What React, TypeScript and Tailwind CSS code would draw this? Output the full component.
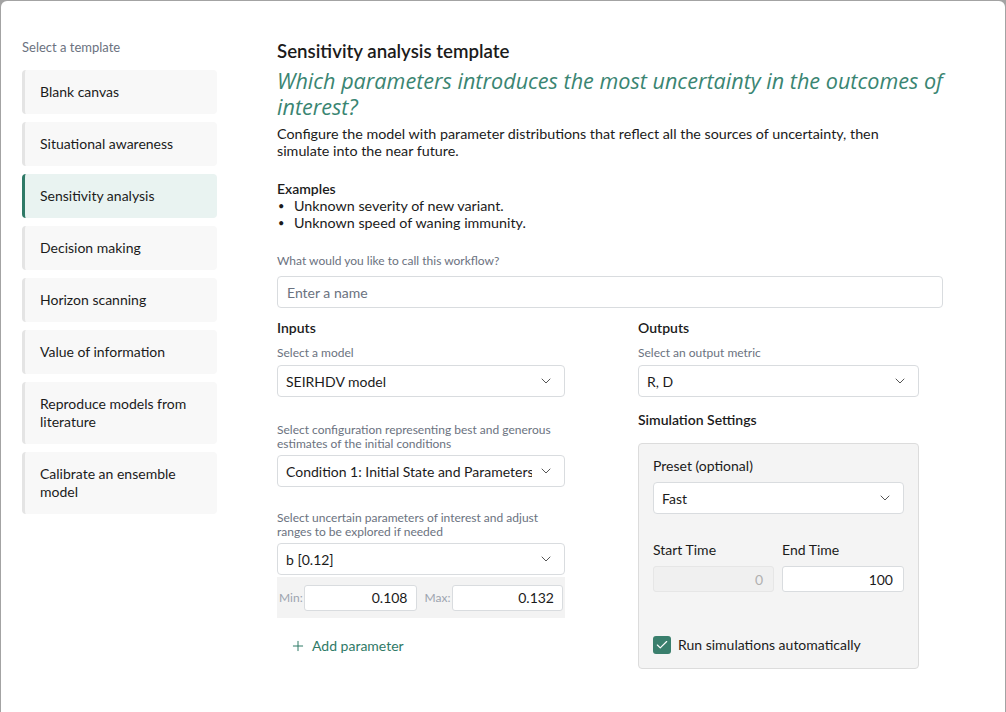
import { ChevronDown, Plus, Check } from 'lucide-react';

const templates = [
  'Blank canvas',
  'Situational awareness',
  'Sensitivity analysis',
  'Decision making',
  'Horizon scanning',
  'Value of information',
  'Reproduce models from literature',
  'Calibrate an ensemble model',
];

const Select = ({ value, className = '' }: { value: string; className?: string }) => (
  <div
    className={`flex items-center justify-between h-8 bg-white border border-[#d9dcdf] rounded-[4px] pl-2 pr-[10px] text-[14px] text-[#1b1b1b] ${className}`}
  >
    <span className="flex-1 min-w-0 overflow-hidden whitespace-nowrap">{value}</span>
    <ChevronDown size={16} strokeWidth={1.5} className="shrink-0 ml-[6px] text-[#555]" />
  </div>
);

export default function App() {
  return (
    <div className="w-[1006px] h-[712px] bg-[#a3a3a3] pt-px px-px overflow-hidden" style={{ fontFamily: 'Lato, "Noto Sans", sans-serif' }}>
      <div className="h-full bg-white rounded-t-[6px] flex">
        {/* sidebar */}
        <div className="w-[216px] shrink-0 pl-[21px] pt-[36px]">
          <div className="text-[13px] text-[#6b7280] h-[20px] leading-[20px]">Select a template</div>
          <div className="mt-[13px] flex flex-col gap-2">
            {templates.map((t) => {
              const active = t === 'Sensitivity analysis';
              return (
                <div
                  key={t}
                  className={`rounded-[4px] border-l-[3px] flex items-center pl-[15px] pr-3 py-[13px] text-[14px] leading-[18px] text-[#1b1b1b] ${
                    active ? 'border-[#2f7a67] bg-[#e9f3f1]' : 'border-[#e4e4e4] bg-[#f8f8f8]'
                  }`}
                >
                  {t}
                </div>
              );
            })}
          </div>
        </div>

        {/* main */}
        <div className="pl-[60px] pt-[39px] w-[770px]">
          <div className="text-[18.7px] font-semibold text-[#1b1b1b] leading-[22px]">Sensitivity analysis template</div>
          <div
            className="mt-[6px] text-[21.6px] italic text-[#3a8572] leading-[26px]"
            style={{ fontFamily: '"Open Sans", Lato, sans-serif' }}
          >
            Which parameters introduces the most uncertainty in the outcomes of interest?
          </div>
          <p className="mt-[5px] text-[14.3px] text-[#1b1b1b] leading-[17px] w-[640px]">
            Configure the model with parameter distributions that reflect all the sources of uncertainty, then simulate into the near future.
          </p>
          <div className="mt-[21px] text-[14px] font-semibold text-[#1b1b1b] leading-[17px]">Examples</div>
          <ul className="text-[14.3px] text-[#1b1b1b] leading-[17px]">
            <li className="flex"><span className="w-[17px] pl-[1px] text-[11px]">•</span>Unknown severity of new variant.</li>
            <li className="flex"><span className="w-[17px] pl-[1px] text-[11px]">•</span>Unknown speed of waning immunity.</li>
          </ul>

          <div className="mt-[23px] text-[12px] text-[#6b7280] leading-[14px]">What would you like to call this workflow?</div>
          <div className="mt-[8px] w-[666px] h-8 border border-[#d9dcdf] rounded-[4px] flex items-center pl-[9px] text-[14px] text-[#6b7280]">
            Enter a name
          </div>

          <div className="mt-[11px] flex gap-[73px]">
            {/* inputs */}
            <div className="w-[288px]">
              <div className="text-[14px] font-semibold text-[#1b1b1b] leading-[18px]">Inputs</div>
              <div className="mt-[9px] text-[12px] text-[#6b7280] leading-[14px]">Select a model</div>
              <Select value="SEIRHDV model" className="mt-[5px]" />

              <div className="mt-[26px] text-[12px] text-[#6b7280] leading-[14px] pr-[4px]">
                Select configuration representing best and generous estimates of the initial conditions
              </div>
              <Select value="Condition 1: Initial State and Parameters" className="mt-[4px]" />

              <div className="mt-[24px] text-[12px] text-[#6b7280] leading-[14px] pr-[4px]">
                Select uncertain parameters of interest and adjust ranges to be explored if needed
              </div>
              <Select value="b [0.12]" className="mt-[4px]" />
              <div className="mt-[2px] h-[41px] bg-[#f3f3f3] flex items-center px-[2px] gap-[2px] text-[12px] text-[#9ca3af]">
                <span className="w-[23px]">Min:</span>
                <div className="w-[113px] h-[26px] bg-white border border-[#d9dcdf] rounded-[3px] flex items-center justify-end pr-[8px] text-[14px] text-[#1b1b1b]">0.108</div>
                <span className="ml-[6px] w-[25px]">Max:</span>
                <div className="w-[112px] h-[26px] bg-white border border-[#d9dcdf] rounded-[3px] flex items-center justify-end pr-[8px] text-[14px] text-[#1b1b1b]">0.132</div>
              </div>
              <div className="mt-[17px] ml-[13px] flex items-center gap-[6px] text-[14px] text-[#2f7a67]">
                <Plus size={16} strokeWidth={1.5} />
                Add parameter
              </div>
            </div>

            {/* outputs */}
            <div className="w-[281px]">
              <div className="text-[14px] font-semibold text-[#1b1b1b] leading-[18px]">Outputs</div>
              <div className="mt-[9px] text-[12px] text-[#6b7280] leading-[14px]">Select an output metric</div>
              <Select value="R, D" className="mt-[5px]" />

              <div className="mt-[14px] text-[14px] font-semibold text-[#1b1b1b] leading-[18px]">Simulation Settings</div>
              <div className="mt-[14px] h-[226px] bg-[#f4f4f4] border border-[#dcdcdc] rounded-[4px] px-[14px] pt-[13px]">
                <div className="text-[14px] text-[#1b1b1b] leading-[18px]">Preset (optional)</div>
                <Select value="Fast" className="mt-[7px]" />
                <div className="mt-[27px] flex gap-[8px]">
                  <div className="w-[121px]">
                    <div className="text-[14px] text-[#1b1b1b] leading-[18px]">Start Time</div>
                    <div className="mt-[7px] h-[26px] bg-[#f0f0f0] border border-[#e6e6e6] rounded-[3px] flex items-center justify-end pr-[10px] text-[14px] text-[#b0b0b0]">0</div>
                  </div>
                  <div className="w-[122px]">
                    <div className="text-[14px] text-[#1b1b1b] leading-[18px]">End Time</div>
                    <div className="mt-[7px] h-[26px] bg-white border border-[#d9dcdf] rounded-[3px] flex items-center justify-end pr-[10px] text-[14px] text-[#1b1b1b]">100</div>
                  </div>
                </div>
                <div className="mt-[42px] flex items-center gap-[7px] text-[14px] text-[#1b1b1b]">
                  <div className="w-[18px] h-[18px] rounded-[3px] bg-[#3a7f6d] flex items-center justify-center">
                    <Check size={14} strokeWidth={2} className="text-white" />
                  </div>
                  Run simulations automatically
                </div>
              </div>
            </div>
          </div>
        </div>
      </div>
    </div>
  );
}
